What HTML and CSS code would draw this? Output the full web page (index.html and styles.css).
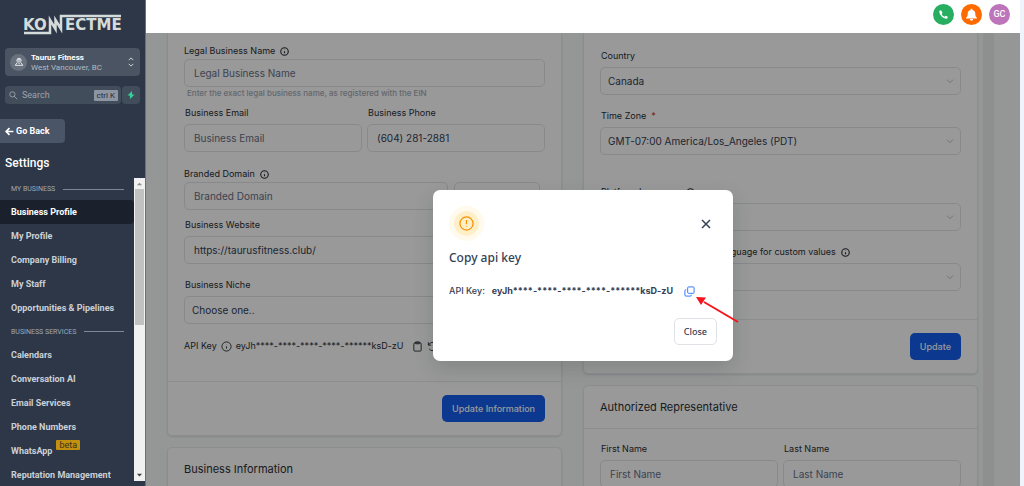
FILE: index.html
```html
<!DOCTYPE html>
<html lang="en">
<head>
<meta charset="utf-8">
<title>KonnectMe – Business Profile</title>
<link rel="stylesheet" href="styles.css">
</head>
<body>
<svg class="defs" aria-hidden="true">
  <symbol id="info" viewBox="0 0 24 24"><circle cx="12" cy="12" r="10"/><path d="M12 16.500v-5M12 8v-.5"/></symbol>
  <symbol id="chevron" viewBox="0 0 24 24"><path d="M3 8l9 9 9-9"/></symbol>
</svg>
<div class="app">
  <aside class="sidebar">
    <svg class="logo" viewBox="0 0 98 22" role="img" aria-label="KonnectMe">
      <g class="logo-text"><text x="-1 10" y="17">KO</text><text x="41" y="17">ECTME</text></g>
      <path class="logo-line" d="M0 20H26V7l5.500 9V7l5.500 9V3H97"/>
    </svg>
    <button class="account" type="button">
      <span class="account-pin"><svg viewBox="0 0 24 24"><circle cx="12" cy="8" r="2.500"/><path d="M12 16c-4-4-5-6-5-8a5 5 0 0 1 10 0c0 2-1 4-5 8zM7 14l-4 6h18l-4-6"/></svg></span>
      <span class="account-text"><b>Taurus Fitness</b><span>West Vancouver, BC</span></span>
      <svg class="updown" viewBox="0 0 8 14"><path d="M1 4.500l3-3 3 3M1 9.500l3 3 3-3"/></svg>
    </button>
    <div class="search-row">
      <label class="search"><svg viewBox="0 0 24 24"><circle cx="9" cy="9" r="7"/><path d="M14 14l8 8"/></svg><input type="text" placeholder="Search" aria-label="Search"><kbd>ctrl K</kbd></label>
      <button class="bolt" type="button" aria-label="Quick actions"><svg viewBox="0 0 16 16"><path d="M10 0L1 9h5v7l9-9h-5z"/></svg></button>
    </div>
    <button class="back" type="button"><svg viewBox="0 0 16 16"><path d="M15 8H2M8 2L2 8l6 6"/></svg>Go Back</button>
    <h1 class="settings">Settings</h1>
    <div class="menu">
      <nav class="menu-list">
        <h2 class="group">MY BUSINESS</h2>
        <a class="item active" href="#">Business Profile</a>
        <a class="item" href="#">My Profile</a>
        <a class="item" href="#">Company Billing</a>
        <a class="item" href="#">My Staff</a>
        <a class="item" href="#">Opportunities &amp; Pipelines</a>
        <h2 class="group">BUSINESS SERVICES</h2>
        <a class="item" href="#">Calendars</a>
        <a class="item" href="#">Conversation AI</a>
        <a class="item" href="#">Email Services</a>
        <a class="item" href="#">Phone Numbers</a>
        <a class="item" href="#">WhatsApp<span class="beta">beta</span></a>
        <a class="item" href="#">Reputation Management</a>
      </nav>
      <div class="scrollbar" aria-hidden="true">
        <svg viewBox="0 0 8 8"><path d="M1 6l3-3 3 3z"/></svg>
        <div class="thumb"></div>
        <svg class="down" viewBox="0 0 8 8"><path d="M1 2l3 3 3-3z"/></svg>
      </div>
    </div>
  </aside>

  <div class="main">
    <header class="topbar">
      <button class="round phone" type="button" aria-label="Call"><svg viewBox="0 0 24 24"><path d="M6.600 2.500L3 4c-1 9 8 18 17 17.500l1.500-4.500-5-2.500-2.300 2.500c-2.700-1.300-5-3.500-6.200-6.200L10 8.500z"/></svg></button>
      <button class="round bell" type="button" aria-label="Notifications"><svg viewBox="0 0 24 24"><path d="M10.500 1.500h3v2C17.500 4 19 7 19 10.500c0 4 1 5.500 3 7.500v1.500H2V18c2-2 3-3.500 3-7.500C5 7 6.500 4 10.500 3.500zM9 20.500h6a3 3 0 0 1-6 0z"/></svg></button>
      <button class="round user" type="button">GC</button>
    </header>
    <div class="stage">
      <main class="content">
        <div class="column">
          <section class="card cut">
            <div class="body left-body">
              <div class="field tight first"><label for="legal">Legal Business Name <svg class="info"><use href="#info"/></svg></label><input id="legal" type="text" placeholder="Legal Business Name"></div>
              <p class="help">Enter the exact legal business name, as registered with the EIN</p>
              <div class="pair contact">
                <div class="field"><label for="email">Business Email</label><input id="email" type="text" placeholder="Business Email"></div>
                <div class="field"><label for="phone">Business Phone</label><input id="phone" type="text" value="(604) 281-2881"></div>
              </div>
              <div class="field tight"><label for="domain">Branded Domain <svg class="info"><use href="#info"/></svg></label>
                <div class="domain"><input id="domain" type="text" placeholder="Branded Domain"><button class="ghost" type="button" aria-label="Add domain"></button></div></div>
              <div class="field near"><label for="site">Business Website</label><input id="site" type="text" value="https://taurusfitness.club/"></div>
              <div class="field"><label for="niche">Business Niche</label><select id="niche"><option>Choose one..</option></select></div>
              <div class="api">API Key <svg class="info big"><use href="#info"/></svg><span>eyJh****-****-****-****-******ksD-zU</span>
                <svg class="line-icon" viewBox="0 0 24 24"><rect x="4" y="4" width="16" height="18" rx="2"/><path d="M8 2h8v4H8z"/></svg>
                <svg class="line-icon" viewBox="0 0 24 24"><path d="M3 3v6h6M3.500 9a9 9 0 0 1 16-2M21 21v-6h-6M20.500 15a9 9 0 0 1-16 2"/></svg>
              </div>
            </div>
            <div class="foot"><button class="primary" type="button">Update Information</button></div>
          </section>
          <section class="card"><h2 class="title">Business Information</h2></section>
        </div>
        <div class="column">
          <section class="card cut">
            <div class="body right-body">
              <div class="field first"><label for="country">Country</label><div class="pick"><select id="country"><option>Canada</option></select><svg><use href="#chevron"/></svg></div></div>
              <div class="field"><label for="zone">Time Zone <i>*</i></label><div class="pick"><select id="zone"><option>GMT-07:00 America/Los_Angeles (PDT)</option></select><svg><use href="#chevron"/></svg></div></div>
              <div class="field far"><label for="plang">Platform Language <svg class="info"><use href="#info"/></svg></label><div class="pick"><select id="plang"><option></option></select><svg><use href="#chevron"/></svg></div></div>
              <div class="field"><label for="clang">Outbound communications language for custom values <svg class="info"><use href="#info"/></svg></label><div class="pick"><select id="clang"><option></option></select><svg><use href="#chevron"/></svg></div></div>
            </div>
            <div class="foot"><button class="primary" type="button">Update</button></div>
          </section>
          <section class="card">
            <h2 class="title">Authorized Representative</h2>
            <div class="body">
              <div class="pair names">
                <div class="field"><label for="first">First Name</label><input id="first" type="text" placeholder="First Name"></div>
                <div class="field"><label for="last">Last Name</label><input id="last" type="text" placeholder="Last Name"></div>
              </div>
            </div>
          </section>
        </div>
        <div class="track" aria-hidden="true"></div>
      </main>
      <div class="overlay">
        <div class="modal" role="dialog" aria-labelledby="dlg">
          <div class="modal-top">
            <span class="warn"><svg viewBox="0 0 24 24"><circle cx="12" cy="12" r="10.500"/><path d="M12 6.500v6.500M12 16.500v.8"/></svg></span>
            <button class="x" type="button" aria-label="Close dialog"><svg viewBox="0 0 12 12"><path d="M2 2l8 8M10 2l-8 8"/></svg></button>
          </div>
          <h2 id="dlg">Copy api key</h2>
          <p class="key"><span>API Key:</span><b>eyJh****-****-****-****-******ksD-zU</b>
            <button class="copy" type="button" aria-label="Copy"><svg viewBox="0 0 24 24"><rect x="8" y="2" width="14" height="14" rx="2"/><path d="M5 8H4a2 2 0 0 0-2 2v10a2 2 0 0 0 2 2h10a2 2 0 0 0 2-2v-1"/></svg></button></p>
          <div class="modal-foot"><button class="close" type="button">Close</button></div>
          <svg class="arrow" viewBox="0 0 44 28" aria-hidden="true"><path class="shaft" d="M42 26L8 6"/><path class="head" d="M0 1l10 .5-5 7.500z"/></svg>
        </div>
      </div>
    </div>
  </div>
</div>
</body>
</html>
```
FILE: styles.css
```css
* { box-sizing: border-box; }
body { margin: 0; background: #eff4fa; font-family: Inter, sans-serif; font-size: 9px; color: #2b2f36; }
h1, h2, p { margin: 0; font-weight: 500; }
button, input, select { font: inherit; color: inherit; margin: 0; padding: 0; border: 0; background: none; }
svg { flex: none; fill: none; stroke: currentColor; stroke-width: 2; }
.defs { position: absolute; width: 0; height: 0; }
.app { display: flex; height: 100vh; overflow: hidden; padding-right: 4px; }

/* Sidebar */
.sidebar { flex: none; width: 146px; display: flex; flex-direction: column; background: #2d3748; border-right: 1px solid #687078; color: #fff; font-family: Roboto, sans-serif; padding-bottom: 5px; }
.logo { width: 98px; height: 22px; margin: 13px 0 0 24px; stroke: none; }
.logo-text { fill: #d5dbda; font: bold 15px "DejaVu Sans", sans-serif; }
.logo-line { stroke: #d5dbda; stroke-width: 2.500; fill: none; }
.account { display: flex; align-items: center; gap: 4px; height: 28px; margin: 13px 5px 0; padding: 0 6px 0 5px; border-radius: 4px; background: #4a5462; text-align: left; }
.account-pin { display: flex; align-items: center; justify-content: center; width: 17px; height: 17px; border-radius: 50%; background: #68717d; }
.account-pin svg { width: 10px; height: 10px; }
.account-text { flex: 1; display: flex; flex-direction: column; padding-top: 2px; font-size: 8px; line-height: 10px; color: #b3bac4; }
.account-text b { color: #fff; }
.updown { width: 6px; height: 12px; stroke-width: 1; }
.search-row { display: flex; gap: 1px; height: 18px; margin: 10px 5px 0; }
.search { flex: 1; min-width: 0; display: flex; align-items: center; gap: 4px; padding: 0 3px 0 4px; border-radius: 4px; background: #424d5c; color: #aab2bd; }
.search svg { width: 9px; height: 9px; }
.search input { flex: 1; width: 0; outline: 0; }
.search input::placeholder { color: #9ba4b0; opacity: 1; }
.search kbd { padding: 0 3px; border-radius: 1px; background: #8e95a2; color: #20293a; font: 8px/11px Roboto, sans-serif; }
.bolt { display: flex; align-items: center; justify-content: center; width: 18px; border-radius: 4px; background: #424d5c; }
.bolt svg { width: 8px; height: 8px; fill: #34d399; stroke: none; }
.back { display: flex; align-items: center; gap: 2px; align-self: flex-start; height: 24px; margin-top: 15px; padding: 0 15px 0 5px; border-radius: 0 4px 4px 0; background: #4a5568; font-weight: 700; }
.back svg { width: 9px; height: 9px; stroke-width: 3; }
.settings { margin: 12px 0 0 5px; font-size: 12px; line-height: 16px; }
.menu { flex: 1; min-height: 0; display: flex; margin-top: 7px; }
.menu-list { flex: 1; overflow: hidden; }
.group { display: flex; align-items: center; gap: 8px; height: 22px; padding: 0 10px 0 11px; font-size: 7px; font-weight: 400; color: #a0a9b5; }
.group::after { content: ""; flex: 1; height: 1px; background: #7d8793; }
.item { display: flex; align-items: center; height: 24px; padding-left: 11px; border-radius: 0 4px 4px 0; color: #cbd0d6; font-weight: 700; text-decoration: none; }
.item + .group { height: 23px; }
.active { background: #1a202c; color: #fff; }
.beta { align-self: flex-start; margin: 1px 0 0 4px; padding: 0 3px; border-radius: 1px; background: #c3900f; color: #3a3420; font-size: 9px; line-height: 10px; font-weight: 400; }
.scrollbar { width: 11px; display: flex; flex-direction: column; align-items: center; background: #f1f1f1; }
.scrollbar svg { width: 7px; height: 11px; fill: #8d8d8d; stroke: none; }
.scrollbar .down { margin-top: auto; fill: #444; }
.thumb { width: 9px; height: 45%; background: #c1c1c1; }

/* Top bar */
.main { flex: 1; min-width: 0; display: flex; flex-direction: column; }
.topbar { display: flex; justify-content: flex-end; align-items: center; gap: 7px; height: 33px; padding: 0 10px 5px 0; background: #fff; }
.round { display: flex; align-items: center; justify-content: center; width: 21px; height: 21px; border-radius: 50%; color: #fff; }
.round svg { width: 13px; height: 13px; fill: #fff; stroke: none; }
.round.phone svg { width: 11px; height: 11px; }
.phone { background: #27ae60; }
.bell { background: #ff6a00; }
.user { background: #bd74ba; font: 500 9px Roboto, sans-serif; }

/* Settings cards */
.stage { flex: 1; min-height: 0; position: relative; background: #f9fcfb; }
.content { display: flex; height: 100%; overflow: hidden; padding: 0 26px 0 21px; }
.column { flex: 1; min-width: 0; }
.column + .column { margin-left: 21px; }
.card { margin-bottom: 11px; background: #fff; border: 1px solid #e9ecef; border-radius: 5px; box-shadow: 0 1px 2px rgba(16, 24, 40, .12); }
.cut { border-top: 0; border-radius: 0 0 5px 5px; }
.body { padding: 0 16px; }
.left-body { padding-top: 11px; padding-bottom: 27px; }
.right-body { padding-top: 16px; padding-bottom: 28px; }
.field { margin-top: 14px; }
.field.first { margin-top: 0; }
.field.near { margin-top: 8px; }
.field.far { margin-top: 30px; }
label { display: flex; align-items: center; gap: 5px; line-height: 14px; margin-bottom: 4px; padding-left: 1px; white-space: nowrap; }
.tight label { margin-bottom: 1px; padding-left: 0; }
.search { margin: 0; }
label i { color: #d92d20; font-style: normal; }
.info { width: 9px; height: 9px; stroke-width: 3; }
.field input, .field select { display: block; width: 100%; height: 28px; padding: 0 9px 1px; border: 1px solid #e2e4e8; border-radius: 5px; background: #fff; font-size: 10px; color: #344054; appearance: none; }
.field input::placeholder { color: #667085; opacity: 1; }
.field select { padding: 0 7px 1px; }
.help { padding-left: 3px; font-size: 8px; line-height: 12px; color: #a6acb6; }
.pair { display: flex; gap: 5px; }
.pair .field { flex: 1; }
.contact { margin-top: 7px; }
.contact .field { margin-top: 0; }
.contact + .field { margin-top: 15px; }
.names .field { margin-top: 13px; }
.domain { display: flex; gap: 6px; padding-right: 5px; }
.domain input { flex: 1; width: 0; }
.ghost { width: 86px; height: 28px; border: 1px solid #e2e4e8; border-radius: 5px; }
.api { display: flex; align-items: center; gap: 4px; margin-top: 14px; line-height: 16px; white-space: nowrap; overflow: hidden; }
.api span { padding-right: 4px; }
.big { width: 11px; height: 11px; stroke-width: 2; }
.line-icon { width: 11px; height: 11px; }
.foot { display: flex; justify-content: flex-end; padding: 13px 16px; border-top: 1px solid #e9ecef; }
.primary { height: 27px; padding: 0 10px; border-radius: 5px; background: #155eef; color: #fff; font-weight: 500; }
.title { padding: 14px 16px; line-height: 14px; font-size: 11px; font-weight: 400; border-bottom: 1px solid #e9ecef; }
.pick { position: relative; }
.pick svg { position: absolute; right: 7px; top: 10px; width: 8px; height: 8px; color: #98a0ab; }
.track { width: 11px; margin-left: 5px; background: #efefef; }

/* Dialog */
.overlay { position: absolute; inset: 0; display: flex; justify-content: center; align-items: flex-start; padding-top: 157px; background: rgba(0, 0, 0, .4); overflow: hidden; }
.modal { position: relative; width: 300px; padding: 16px; border-radius: 7px; background: #fff; box-shadow: 0 8px 20px rgba(16, 40, 40, .16); color: #344054; }
.modal-top { display: flex; justify-content: space-between; align-items: center; padding-right: 4px; }
.warn { display: flex; align-items: center; justify-content: center; width: 25px; height: 25px; margin: 5px; border-radius: 50%; background: #feefc6; outline: 5px solid #fffaeb; color: #f79009; }
.warn svg { width: 15px; height: 15px; }
.x { display: flex; padding: 1px; }
.x svg { width: 12px; height: 12px; stroke-width: 1.500; }
.modal h2 { margin-top: 9px; font: 500 12px/16px "Noto Sans", sans-serif; }
.key { display: flex; align-items: center; gap: 7px; margin-top: 17px; line-height: 16px; }
.copy { display: flex; padding-left: 4px; color: #2970ff; }
.copy svg { width: 11px; height: 11px; }
.modal-foot { display: flex; justify-content: flex-end; margin-top: 19px; }
.close { height: 27px; padding: 0 9px; border: 1px solid #dfe2e7; border-radius: 5px; font: 500 9px "Noto Sans", sans-serif; }
.arrow { position: absolute; left: 263px; top: 106px; width: 44px; height: 28px; color: #f5141c; }
.arrow .head { fill: currentColor; stroke: none; }
```
